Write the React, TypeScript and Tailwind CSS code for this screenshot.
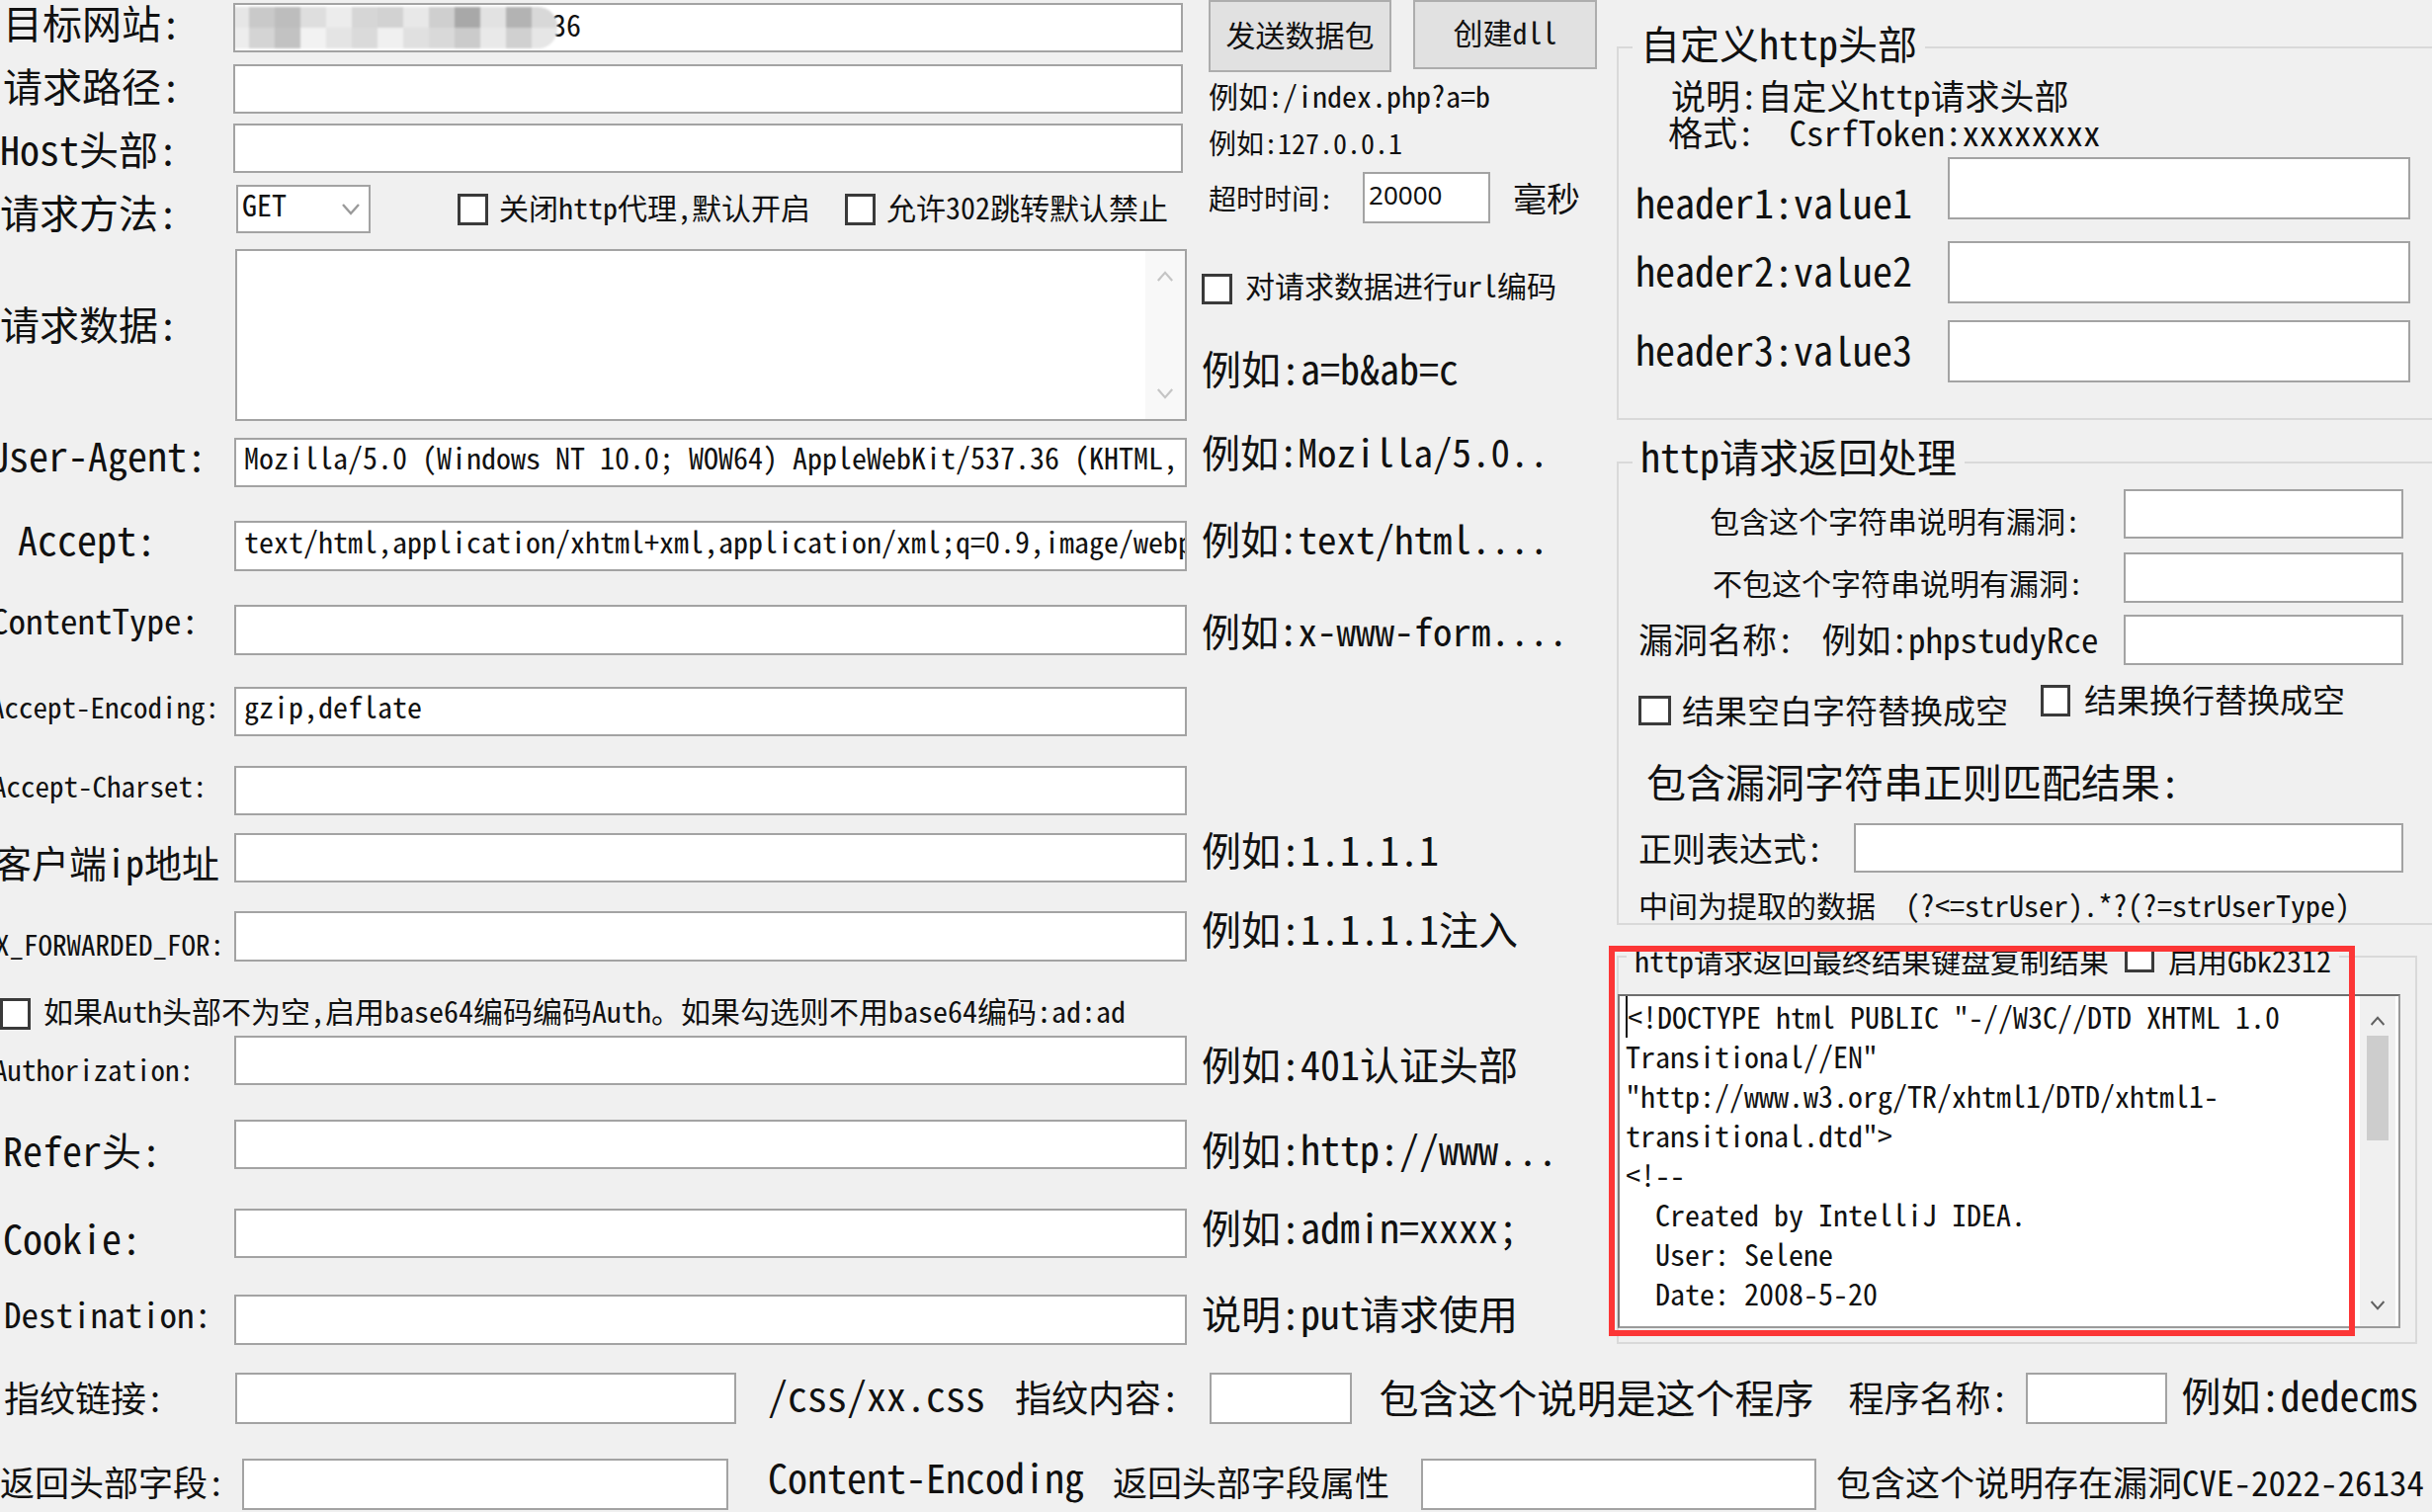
import React from "react";

const FONT = "font-['Noto_Sans_Mono_CJK_SC','Liberation_Mono','Noto_Sans_CJK_SC',monospace]";

function T({ className = "", children }: { className?: string; children?: React.ReactNode }) {
  return <span className={`block shrink-0 leading-none whitespace-nowrap ${className}`}>{children}</span>;
}

function Input({ className = "", children }: { className?: string; children?: React.ReactNode }) {
  return (
    <div className={`bg-white border-2 border-[#a3a3a3] shrink-0 flex items-center overflow-hidden whitespace-nowrap ${className}`}>
      {children}
    </div>
  );
}

function Check({ className = "" }: { className?: string }) {
  return <div className={`bg-white border-[3px] border-[#3a3a3a] shrink-0 ${className}`} />;
}

function Chevron({ up, className = "" }: { up?: boolean; className?: string }) {
  return (
    <svg viewBox="0 0 20 12" className={className} fill="none" stroke="currentColor" strokeWidth="2.4">
      {up ? <path d="M2 11 L10 2 L18 11" /> : <path d="M2 1 L10 10 L18 1" />}
    </svg>
  );
}

type RowP = {
  mt: string;
  h: string;
  label: string;
  labelCls: string;
  text?: string;
  note?: string;
  noteCls?: string;
};

function FieldRow({ mt, h, label, labelCls, text, note, noteCls = "" }: RowP) {
  return (
    <div className={`flex items-center ${mt} ${h}`}>
      <div className="w-[237px] shrink-0 h-full flex items-center">
        <T className={labelCls}>{label}</T>
      </div>
      <Input className="w-[964px] h-full">
        {text && <T className="pl-[8px] text-[30px] pb-[0.4em]">{text}</T>}
      </Input>
      {note && <T className={`ml-[15px] ${noteCls}`}>{note}</T>}
    </div>
  );
}

function Mosaic() {
  const rows = [
    ["#e6e6e6", "#c9c9c9", "#bdbdbd", "#dedede", "#ececec", "#d6d6d6", "#d2d2d2", "#e8e8e8", "#cfcfcf", "#a8a8a8", "#e2e2e2", "#b3b3b3", "#d8d8d8"],
    ["#ededed", "#d4d4d4", "#c2c2c2", "#f2f2f2", "#e4e4e4", "#dadada", "#f0f0f0", "#e0e0e0", "#d9d9d9", "#cbcbcb", "#e9e9e9", "#d0d0d0", "#e6e6e6"],
  ];
  return (
    <div className="ml-[-12px] h-[42px] w-[338px] shrink-0 rounded-r-[20px] overflow-hidden flex flex-col blur-[1px] bg-[#eeeeee]">
      {rows.map((r, i) => (
        <div key={i} className="flex flex-1">
          {r.map((c, j) => (
            <div key={j} className="flex-1" style={{ backgroundColor: c }} />
          ))}
        </div>
      ))}
    </div>
  );
}

export default function App() {
  return (
    <div className={`w-[2461px] h-[1530px] overflow-hidden bg-[#f0f0f0] text-[#111111] ${FONT}`}>
      {/* top section */}
      <div className="flex h-[1361px]">
        {/* left area */}
        <div className="w-[1636px] shrink-0 flex flex-col">
          {/* block A */}
          <div className="flex h-[236px]">
            <div className="w-[1202px] shrink-0 flex flex-col">
              <div className="flex items-center mt-[3px] h-[50px]">
                <div className="w-[236px] shrink-0 flex items-center">
                  <T className="text-[40px] ml-[3px] pb-[0.3em]">目标网站:</T>
                </div>
                <Input className="w-[961px] h-full">
                  <Mosaic />
                  <T className="text-[30px] ml-[-6px] pb-[0.3em]">36</T>
                </Input>
              </div>
              <div className="flex items-center mt-[12px] h-[50px]">
                <div className="w-[236px] shrink-0 flex items-center">
                  <T className="text-[40px] ml-[3px] pb-[0.2em]">请求路径:</T>
                </div>
                <Input className="w-[961px] h-full" />
              </div>
              <div className="flex items-center mt-[10px] h-[50px]">
                <div className="w-[236px] shrink-0 flex items-center pt-[8px]">
                  <T className="text-[40px] pb-[0.2em]">Host头部:</T>
                </div>
                <Input className="w-[961px] h-full" />
              </div>
              <div className="flex items-center mt-[12px] h-[49px]">
                <div className="w-[239px] shrink-0 flex items-center pt-[8px]">
                  <T className="text-[40px] pb-[0.1em]">请求方法:</T>
                </div>
                <div className="w-[136px] h-full shrink-0 bg-white border-2 border-[#a3a3a3] flex items-center justify-between pl-[4px] pr-[8px]">
                  <T className="text-[30px] pb-[0.4em]">GET</T>
                  <Chevron className="w-[20px] h-[12px] text-[#9a9a9a]" />
                </div>
                <Check className="ml-[88px] w-[31px] h-[32px]" />
                <T className="ml-[11px] text-[30px] pb-[0.15em]">关闭http代理,默认开启</T>
                <Check className="ml-[35px] w-[31px] h-[32px]" />
                <T className="ml-[11px] text-[30px] pb-[0.15em]">允许302跳转默认禁止</T>
              </div>
            </div>
            <div className="ml-[21px] flex flex-col">
              <div className="flex h-[74px] items-start">
                <div className="w-[185px] h-[73px] bg-[#e1e1e1] border-2 border-[#adadad] flex items-center justify-center">
                  <T className="text-[30px] pb-[0.2em]">发送数据包</T>
                </div>
                <div className="ml-[22px] w-[186px] h-[70px] bg-[#e1e1e1] border-2 border-[#adadad] flex items-center justify-center">
                  <T className="text-[30px] pb-[0.2em]">创建dll</T>
                </div>
              </div>
              <div className="h-[50px] flex items-center">
                <T className="text-[30px] pb-[0.2em]">例如:/index.php?a=b</T>
              </div>
              <div className="h-[46px] flex items-center">
                <T className="text-[28px] pb-[0.25em]">例如:127.0.0.1</T>
              </div>
              <div className="mt-[4px] h-[52px] flex items-center">
                <T className="text-[28px]">超时时间:</T>
                <div className="ml-[30px] w-[129px] h-full bg-white border-2 border-[#a3a3a3] flex items-center pl-[4px]">
                  <T className="font-['Noto_Sans',sans-serif] text-[26px] pb-[0.2em]">20000</T>
                </div>
                <T className="ml-[23px] text-[34px]">毫秒</T>
              </div>
            </div>
          </div>

          {/* request data */}
          <div className="flex mt-[16px] h-[174px]">
            <div className="w-[238px] shrink-0 flex items-center pb-[18px]">
              <T className="text-[40px] pb-[0.15em]">请求数据:</T>
            </div>
            <div className="w-[963px] h-full shrink-0 bg-white border-2 border-[#a3a3a3] flex justify-end">
              <div className="w-[40px] h-full bg-[#f8f8f8] flex flex-col items-center justify-between py-[20px]">
                <Chevron up className="w-[18px] h-[11px] text-[#c4c4c4]" />
                <Chevron className="w-[18px] h-[11px] text-[#c4c4c4]" />
              </div>
            </div>
            <div className="ml-[15px] flex flex-col">
              <div className="flex items-center mt-[21px]">
                <Check className="w-[31px] h-[31px]" />
                <T className="ml-[13px] text-[30px] pb-[0.3em]">对请求数据进行url编码</T>
              </div>
              <T className="mt-[40px] text-[40px] pb-[0.1em]">例如:a=b&amp;ab=c</T>
            </div>
          </div>

          <FieldRow
            mt="mt-[17px]"
            h="h-[50px]"
            label="User-Agent:"
            labelCls="text-[40px] ml-[-11px] pb-[0.4em]"
            text="Mozilla/5.0 (Windows NT 10.0; WOW64) AppleWebKit/537.36 (KHTML, li"
            note="例如:Mozilla/5.0.."
            noteCls="text-[39px] pb-[0.25em] mb-[14px]"
          />
          <FieldRow
            mt="mt-[34px]"
            h="h-[51px]"
            label="Accept:"
            labelCls="text-[40px] ml-[18px] pb-[0.4em]"
            text="text/html,application/xhtml+xml,application/xml;q=0.9,image/webp"
            note="例如:text/html...."
            noteCls="text-[39px] pb-[0.4em]"
          />
          <FieldRow
            mt="mt-[34px]"
            h="h-[51px]"
            label="ContentType:"
            labelCls="text-[35px] ml-[-9px] mb-[8px] pb-[0.4em]"
            note="例如:x-www-form...."
            noteCls="text-[39px] mt-[12px] pb-[0.3em]"
          />
          <FieldRow
            mt="mt-[32px]"
            h="h-[50px]"
            label="Accept-Encoding:"
            labelCls="text-[29px] ml-[-10px] mt-[6px] pb-[0.6em]"
            text="gzip,deflate"
          />
          <FieldRow
            mt="mt-[30px]"
            h="h-[50px]"
            label="Accept-Charset:"
            labelCls="text-[29px] ml-[-8px] mt-[6px] pb-[0.6em]"
          />
          <FieldRow
            mt="mt-[18px]"
            h="h-[50px]"
            label="客户端ip地址"
            labelCls="text-[38px] ml-[-6px] mt-[16px] pb-[0.2em]"
            note="例如:1.1.1.1"
            noteCls="text-[40px] mb-[10px] pb-[0.2em]"
          />
          <FieldRow
            mt="mt-[29px]"
            h="h-[51px]"
            label="X_FORWARDED_FOR:"
            labelCls="text-[29px] ml-[-5px] mt-[22px] pb-[0.25em]"
            note="例如:1.1.1.1注入"
            noteCls="text-[40px] mb-[10px] pb-[0.2em]"
          />
          <div className="flex items-center mt-[37px] h-[32px]">
            <Check className="w-[31px] h-[32px]" />
            <T className="ml-[13px] text-[30px] pb-[0.3em]">
              如果Auth头部不为空,启用base64编码编码Auth。如果勾选则不用base64编码:ad:ad
            </T>
          </div>
          <FieldRow
            mt="mt-[6px]"
            h="h-[50px]"
            label="Authorization:"
            labelCls="text-[29px] ml-[-7px] mt-[28px] pb-[0.4em]"
            note="例如:401认证头部"
            noteCls="text-[40px] mt-[14px] pb-[0.2em]"
          />
          <FieldRow
            mt="mt-[35px]"
            h="h-[50px]"
            label="Refer头:"
            labelCls="text-[40px] ml-[3px] mt-[14px] pb-[0.1em]"
            note="例如:http://www..."
            noteCls="text-[40px] mt-[14px] pb-[0.15em]"
          />
          <FieldRow
            mt="mt-[40px]"
            h="h-[50px]"
            label="Cookie:"
            labelCls="text-[40px] ml-[3px] mt-[18px] pb-[0.25em]"
            note="例如:admin=xxxx;"
            noteCls="text-[40px] mb-[8px] pb-[0.15em]"
          />
          <FieldRow
            mt="mt-[37px]"
            h="h-[51px]"
            label="Destination:"
            labelCls="text-[35px] ml-[4px] mt-[4px] pb-[0.5em]"
            note="说明:put请求使用"
            noteCls="text-[40px] mb-[8px] pb-[0.2em]"
          />
        </div>

        {/* right area */}
        <div className="relative w-[825px] shrink-0 flex flex-col">
          {/* group 1 */}
          <fieldset className="mt-[22px] w-[840px] h-[403px] border-2 border-[#d9d9d9] flex flex-col">
            <legend className="ml-[14px] px-[8px] pb-[10px] text-[40px] leading-[42px] whitespace-nowrap">自定义http头部</legend>
            <span className="mt-[3px] ml-[53px] text-[35px] leading-[37px] whitespace-nowrap">说明:自定义http请求头部</span>
            <span className="ml-[50px] text-[35px] leading-[37px] whitespace-pre">格式:  CsrfToken:xxxxxxxx</span>
            <div className="flex mt-[8px] h-[63px]">
              <div className="w-[333px] shrink-0 pl-[17px] pt-[25px]">
                <T className="text-[40px]">header1:value1</T>
              </div>
              <Input className="w-[468px] h-full" />
            </div>
            <div className="flex items-center mt-[22px] h-[63px]">
              <div className="w-[333px] shrink-0 pl-[17px] flex items-center">
                <T className="text-[40px] pb-[0.15em]">header2:value2</T>
              </div>
              <Input className="w-[468px] h-full" />
            </div>
            <div className="flex items-center mt-[17px] h-[63px]">
              <div className="w-[333px] shrink-0 pl-[17px] flex items-center">
                <T className="text-[40px] pb-[0.15em]">header3:value3</T>
              </div>
              <Input className="w-[468px] h-full" />
            </div>
          </fieldset>

          {/* group 2 */}
          <fieldset className="mt-[16px] w-[840px] h-[495px] border-2 border-[#d9d9d9] flex flex-col">
            <legend className="ml-[14px] px-[8px] pb-[14px] text-[40px] leading-[40px] whitespace-nowrap">http请求返回处理</legend>
            <div className="flex h-[50px]">
              <div className="w-[467px] shrink-0 flex justify-end pt-[16px]">
                <T className="text-[30px]">包含这个字符串说明有漏洞:</T>
              </div>
              <Input className="ml-[44px] w-[283px] h-full" />
            </div>
            <div className="flex mt-[14px] h-[51px]">
              <div className="w-[470px] shrink-0 flex justify-end pt-[15px]">
                <T className="text-[30px]">不包这个字符串说明有漏洞:</T>
              </div>
              <Input className="ml-[41px] w-[283px] h-full" />
            </div>
            <div className="flex items-center mt-[12px] h-[51px]">
              <div className="w-[511px] shrink-0 pl-[20px] flex items-center">
                <T className="text-[35px] pb-[0.1em]">漏洞名称:</T>
                <T className="ml-[28px] text-[35px] pb-[0.1em]">例如:phpstudyRce</T>
              </div>
              <Input className="w-[283px] h-full" />
            </div>
            <div className="flex mt-[18px] h-[44px]">
              <div className="self-end flex items-center ml-[20px]">
                <Check className="w-[33px] h-[30px]" />
                <T className="ml-[11px] text-[33px]">结果空白字符替换成空</T>
              </div>
              <div className="self-start flex items-center ml-[33px]">
                <Check className="w-[30px] h-[32px]" />
                <T className="ml-[14px] text-[33px] pb-[0.1em]">结果换行替换成空</T>
              </div>
            </div>
            <T className="mt-[35px] ml-[28px] text-[40px]">包含漏洞字符串正则匹配结果:</T>
            <div className="flex items-center mt-[23px] h-[50px]">
              <div className="w-[238px] shrink-0 pl-[20px] flex items-center">
                <T className="text-[34px]">正则表达式:</T>
              </div>
              <Input className="w-[556px] h-full" />
            </div>
            <span className="mt-[17px] ml-[20px] text-[30px] leading-none whitespace-pre">中间为提取的数据  (?&lt;=strUser).*?(?=strUserType)</span>
          </fieldset>

          {/* group 3 */}
          <fieldset className="mt-[12px] w-[810px] h-[412px] border-2 border-[#d9d9d9] flex flex-col">
            <legend className="ml-[8px] px-[8px] text-[30px] leading-[36px] whitespace-nowrap">
              <span className="align-middle">http请求返回最终结果键盘复制结果</span>
              <span className="inline-block align-middle ml-[16px] w-[30px] h-[26px] bg-white border-[3px] border-[#3a3a3a]" />
              <span className="align-middle ml-[14px]">启用Gbk2312</span>
            </legend>
            <div className="mt-[17px] ml-[-1px] w-[792px] h-[338px] bg-white border-2 border-[#9a9a9a] border-t-[#6e6e6e] border-l-[#7a7a7a] flex">
              <div className="flex-1 pl-[6px] text-[30px] leading-[40px] whitespace-pre overflow-hidden">
                <div>
                  <span className="border-l-2 border-[#111111]">{"<!DOCTYPE html PUBLIC \"-//W3C//DTD XHTML 1.0"}</span>
                </div>
                <div>{"Transitional//EN\""}</div>
                <div>{"\"http://www.w3.org/TR/xhtml1/DTD/xhtml1-"}</div>
                <div>{"transitional.dtd\">"}</div>
                <div>{"<!--"}</div>
                <div>{"  Created by IntelliJ IDEA."}</div>
                <div>{"  User: Selene"}</div>
                <div>{"  Date: 2008-5-20"}</div>
                <div>{"  ."}</div>
              </div>
              <div className="w-[36px] mr-[3px] h-full bg-[#f0f0f0] flex flex-col items-center">
                <Chevron up className="mt-[20px] w-[16px] h-[10px] text-[#606060]" />
                <div className="mt-[10px] w-[22px] h-[106px] bg-[#cdcdcd]" />
                <div className="flex-1" />
                <Chevron className="mb-[16px] w-[16px] h-[10px] text-[#606060]" />
              </div>
            </div>
          </fieldset>

          {/* red highlight */}
          <div className="absolute left-[-8px] top-[957px] w-[755px] h-[395px] border-[6px] border-[#fc3636]" />
        </div>
      </div>

      {/* bottom row 1 */}
      <div className="flex items-center mt-[28px] h-[52px]">
        <div className="w-[238px] shrink-0 flex items-center">
          <T className="ml-[4px] text-[36px] pb-[0.1em]">指纹链接:</T>
        </div>
        <Input className="w-[507px] h-full" />
        <T className="ml-[32px] text-[40px] pb-[0.2em]">/css/xx.css</T>
        <T className="ml-[30px] text-[37px] pb-[0.1em]">指纹内容:</T>
        <Input className="ml-[30px] w-[144px] h-full" />
        <T className="ml-[28px] text-[40px] pb-[0.1em]">包含这个说明是这个程序</T>
        <T className="ml-[35px] text-[36px] pb-[0.1em]">程序名称:</T>
        <Input className="ml-[17px] w-[143px] h-full" />
        <T className="ml-[15px] text-[40px] pb-[0.2em]">例如:dedecms</T>
      </div>

      {/* bottom row 2 */}
      <div className="flex items-center mt-[35px] h-[52px]">
        <div className="w-[245px] shrink-0 flex items-center">
          <T className="text-[35px] pb-[0.2em]">返回头部字段:</T>
        </div>
        <Input className="w-[492px] h-full" />
        <T className="ml-[40px] text-[40px] pb-[0.4em]">Content-Encoding</T>
        <T className="ml-[29px] text-[35px] pb-[0.2em]">返回头部字段属性</T>
        <Input className="ml-[32px] w-[400px] h-full" />
        <T className="ml-[20px] text-[35px] pb-[0.2em]">包含这个说明存在漏洞CVE-2022-26134</T>
      </div>
    </div>
  );
}
